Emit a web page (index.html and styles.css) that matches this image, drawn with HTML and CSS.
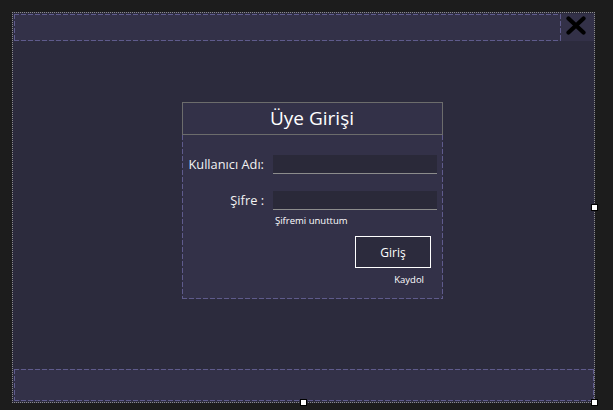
FILE: index.html
```html
<!DOCTYPE html>
<html lang="tr">
<head>
<meta charset="utf-8">
<title>Üye Girişi</title>
<link rel="stylesheet" href="styles.css">
</head>
<body>
<div class="canvas">
  <div class="form">
    <div class="top-row">
      <div class="top-panel dashed"></div>
      <div class="close-box">
        <svg class="close-icon" width="20" height="19" viewBox="0 0 20 19">
          <path d="M2.5 2.5 L17.5 16.5 M17.5 2.5 L2.5 16.5" stroke="#000" stroke-width="4.2" stroke-linecap="round" fill="none"/>
        </svg>
      </div>
    </div>
    <div class="middle">
      <div class="login">
        <div class="login-head">Üye Girişi</div>
        <div class="login-body">
          <div class="field">
            <label class="field-label">Kullanıcı Adı:</label>
            <div class="textbox"></div>
          </div>
          <div class="field second">
            <label class="field-label">Şifre :</label>
            <div class="textbox"></div>
          </div>
          <div class="forgot">Şifremi unuttum</div>
          <div class="actions">
            <button class="btn">Giriş</button>
            <div class="register">Kaydol</div>
          </div>
        </div>
      </div>
    </div>
    <div class="bottom-panel dashed"></div>
  </div>
  <span class="handle h-right"></span>
  <span class="handle h-bottom"></span>
  <span class="handle h-corner"></span>
</div>
</body>
</html>
```
FILE: styles.css
```css
html, body {
  margin: 0;
  padding: 0;
  background: #1c1c1c;
}
body {
  width: 613px;
  height: 410px;
  overflow: hidden;
  font-family: "Open Sans", "Noto Sans", sans-serif;
  color: #fff;
}
.canvas {
  position: relative;
  width: 613px;
  height: 410px;
  padding: 12px 0 0 12px;
  box-sizing: border-box;
}
.form {
  width: 583px;
  height: 391px;
  box-sizing: border-box;
  border: 1px dotted #8a8a8a;
  background: #2c2b3d;
  padding: 1px 0 1px 1px;
  display: flex;
  flex-direction: column;
}
.dashed {
  background:
    repeating-linear-gradient(90deg, #5f5b8c 0 5px, transparent 5px 7px) left top / 100% 1px no-repeat,
    repeating-linear-gradient(90deg, #5f5b8c 0 5px, transparent 5px 7px) left bottom / 100% 1px no-repeat,
    repeating-linear-gradient(180deg, #5f5b8c 0 5px, transparent 5px 7px) left top / 1px 100% no-repeat,
    repeating-linear-gradient(180deg, #5f5b8c 0 5px, transparent 5px 7px) right top / 1px 100% no-repeat,
    #333148;
}
.top-row {
  display: flex;
  height: 27px;
}
.top-panel {
  width: 547px;
  height: 27px;
}
.close-box {
  width: 33px;
  height: 27px;
  background: #333148;
  display: flex;
  align-items: flex-start;
  justify-content: flex-start;
}
.close-icon {
  margin: 2px 0 0 5px;
  display: block;
}
.middle {
  flex: 1;
  padding: 61px 0 0 168px;
  box-sizing: border-box;
}
.login {
  width: 261px;
  background: #333148;
}
.login-head {
  height: 33px;
  box-sizing: border-box;
  border: 1px solid #6c6c6c;
  text-align: center;
  font-size: 19px;
  line-height: 30px;
  padding-right: 1px;
}
.login-body {
  height: 164px;
  box-sizing: border-box;
  padding-top: 20px;
  background:
    repeating-linear-gradient(90deg, #5f5b8c 0 5px, transparent 5px 7px) left bottom / 100% 1px no-repeat,
    repeating-linear-gradient(180deg, #5f5b8c 0 5px, transparent 5px 7px) left top / 1px 100% no-repeat,
    repeating-linear-gradient(180deg, #5f5b8c 0 5px, transparent 5px 7px) right top / 1px 100% no-repeat,
    #333148;
}
.field {
  display: flex;
  align-items: center;
  height: 19px;
}
.field.second {
  margin-top: 17px;
}
.field-label {
  width: 82px;
  margin-right: 9px;
  text-align: right;
  font-size: 12.8px;
  line-height: 19px;
  color: #f2f2f2;
  white-space: nowrap;
}
.textbox {
  width: 164px;
  height: 19px;
  box-sizing: border-box;
  background: #2a2939;
  border-bottom: 1px solid #8c8c8c;
}
.forgot {
  margin: 4px 0 0 93px;
  font-size: 9.5px;
  line-height: 13px;
}
.actions {
  display: flex;
  flex-direction: column;
  align-items: flex-end;
  padding-right: 12px;
  margin-top: 9px;
}
.btn {
  width: 76px;
  height: 32px;
  box-sizing: border-box;
  background: #2c2b3d;
  border: 1px solid #fff;
  color: #fff;
  font-family: "Open Sans", "Noto Sans", sans-serif;
  font-size: 12px;
  padding: 0;
  margin: 0;
}
.register {
  margin: 5px 7px 0 0;
  font-size: 9.5px;
  line-height: 13px;
}
.bottom-panel {
  height: 32px;
}
.handle {
  position: absolute;
  width: 7px;
  height: 7px;
  box-sizing: border-box;
  background: #fff;
  border: 1px solid #000;
}
.h-right { left: 591px; top: 204px; }
.h-bottom { left: 300px; top: 399px; }
.h-corner { left: 591px; top: 399px; }
```
